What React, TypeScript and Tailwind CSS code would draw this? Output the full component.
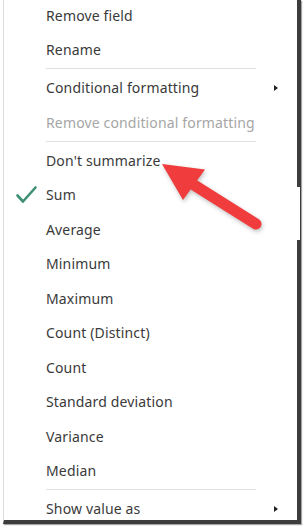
import React from "react";

type Item =
  | { kind: "item"; label: string; disabled?: boolean; sub?: boolean; checked?: boolean }
  | { kind: "sep" };

const items: Item[] = [
  { kind: "item", label: "Remove field" },
  { kind: "item", label: "Rename" },
  { kind: "sep" },
  { kind: "item", label: "Conditional formatting", sub: true },
  { kind: "item", label: "Remove conditional formatting", disabled: true },
  { kind: "sep" },
  { kind: "item", label: "Don't summarize" },
  { kind: "item", label: "Sum", checked: true },
  { kind: "item", label: "Average" },
  { kind: "item", label: "Minimum" },
  { kind: "item", label: "Maximum" },
  { kind: "item", label: "Count (Distinct)" },
  { kind: "item", label: "Count" },
  { kind: "item", label: "Standard deviation" },
  { kind: "item", label: "Variance" },
  { kind: "item", label: "Median" },
  { kind: "sep" },
  { kind: "item", label: "Show value as", sub: true },
];

export default function App() {
  return (
    <div
      className="relative w-[304px] h-[530px] bg-white overflow-hidden"
      style={{ fontFamily: '"Noto Sans", "Open Sans", sans-serif' }}
    >
      <div className="ml-[3px] w-[298px] h-[524px] bg-white border-l border-l-[#dcdcdc] border-r-4 border-r-[#3c3c3c] border-b-4 border-b-[#3c3c3c] shadow-[1px_1px_1px_rgba(0,0,0,0.35)] overflow-hidden">
        <div className="flex flex-col -mt-[2px]">
          {items.map((it, i) =>
            it.kind === "sep" ? (
              <div key={i} className="h-[3.5px] flex items-center pl-[42px] pr-[41px]">
                <div className="h-px w-full bg-[#e1e1e1]" />
              </div>
            ) : (
              <div
                key={i}
                className={
                  "relative h-[34.5px] shrink-0 flex items-center justify-between pl-[42px] pr-[19px] text-[14px] tracking-[0.15px] " +
                  (it.disabled ? "text-[#a6a6a6]" : "text-[#3a3a3a]")
                }
              >
                {it.checked && (
                  <svg
                    className="absolute left-[11px] top-[7px]"
                    width="24"
                    height="22"
                    viewBox="0 0 24 22"
                  >
                    <path
                      d="M2.5 10.5 L8 16.5 L20.5 2.5"
                      fill="none"
                      stroke="#3f8f76"
                      strokeWidth="2.6"
                      strokeLinecap="round"
                      strokeLinejoin="round"
                    />
                  </svg>
                )}
                <span>{it.label}</span>
                {it.sub && (
                  <span className="w-0 h-0 border-y-[3.5px] border-y-transparent border-l-[4px] border-l-[#222]" />
                )}
              </div>
            )
          )}
        </div>
      </div>

      {/* artifact: white patch over right border */}
      <div className="absolute left-[286px] top-[187px] w-[14px] h-[53px] bg-gradient-to-r from-transparent via-white to-white" />

      {/* red arrow */}
      <svg
        className="absolute left-0 top-0"
        width="304"
        height="530"
        viewBox="0 0 304 530"
        style={{ filter: "drop-shadow(1px 2px 2px rgba(0,0,0,0.25))" }}
      >
        <line
          x1="194"
          y1="185"
          x2="256"
          y2="224"
          stroke="#f03c3c"
          strokeWidth="11"
          strokeLinecap="round"
        />
        <polygon points="162,164 205,169.5 183,200" fill="#f03c3c" />
      </svg>
    </div>
  );
}
